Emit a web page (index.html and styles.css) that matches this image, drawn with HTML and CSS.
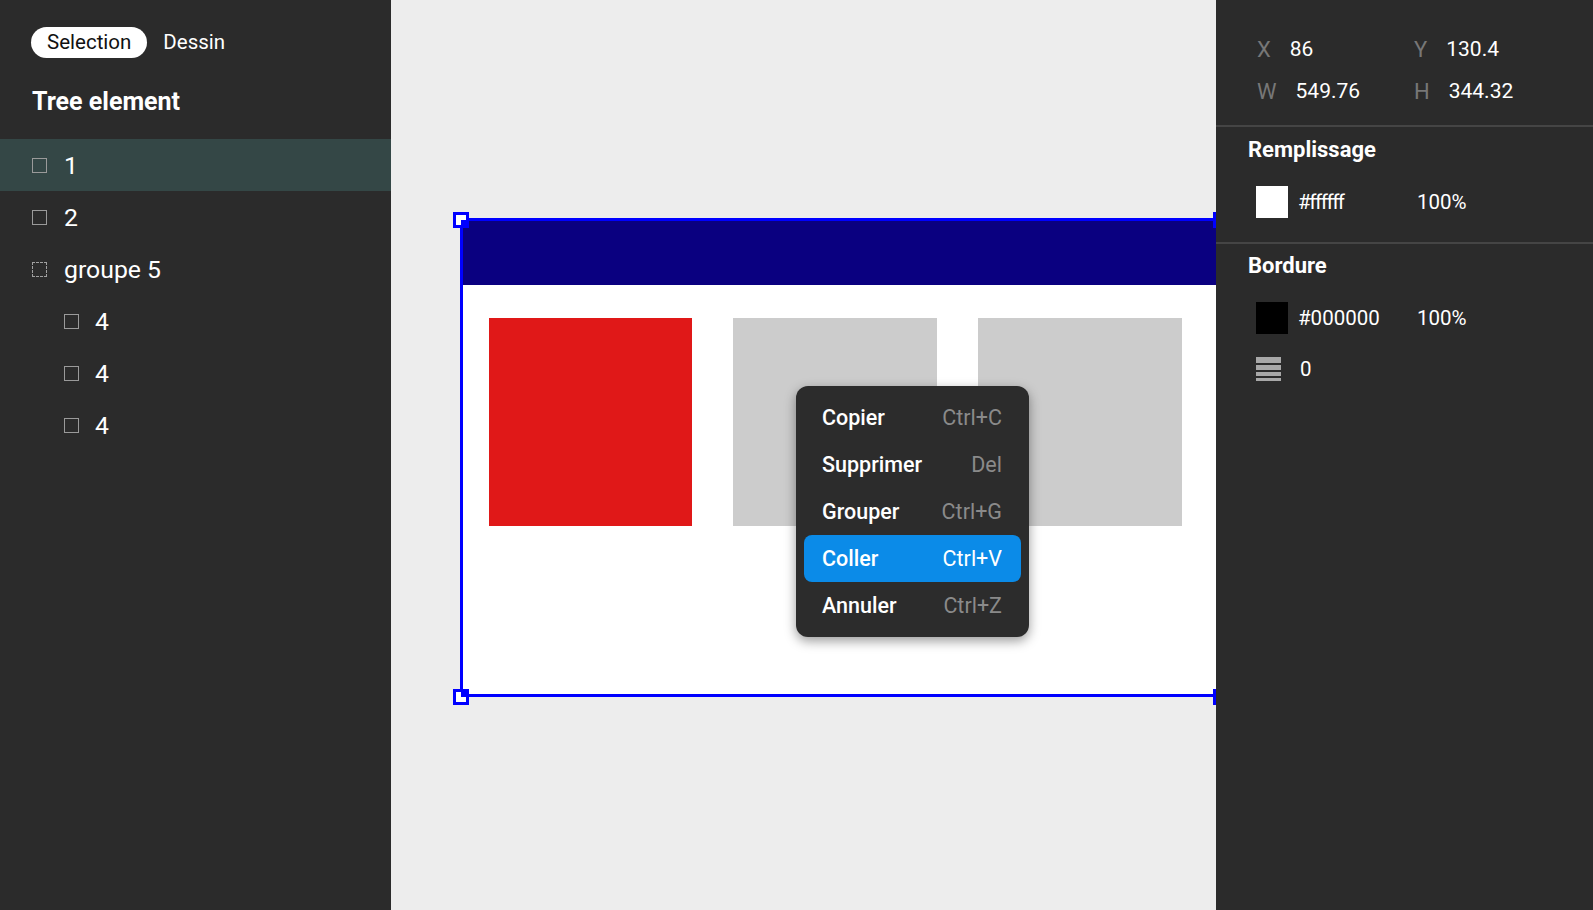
FILE: index.html
```html
<!DOCTYPE html>
<html lang="fr">
<head>
<meta charset="utf-8">
<title>Editor</title>
<link rel="stylesheet" href="styles.css">
</head>
<body>
<div class="app">
  <aside class="left">
    <div class="tabs">
      <span class="tab active">Selection</span>
      <span class="tab">Dessin</span>
    </div>
    <h2 class="tree-title">Tree element</h2>
    <ul class="tree">
      <li class="node selected"><span class="cb"></span><span class="label">1</span></li>
      <li class="node"><span class="cb"></span><span class="label">2</span></li>
      <li class="node"><span class="cb dashed"></span><span class="label">groupe 5</span></li>
      <li class="node child"><span class="cb"></span><span class="label">4</span></li>
      <li class="node child"><span class="cb"></span><span class="label">4</span></li>
      <li class="node child"><span class="cb"></span><span class="label">4</span></li>
    </ul>
  </aside>

  <main class="canvas">
    <div class="frame">
      <div class="frame-header"></div>
      <div class="frame-body">
        <div class="box red"></div>
        <div class="box gray"></div>
        <div class="box gray"></div>
      </div>
    </div>
    <span class="handle h-tl"></span>
    <span class="handle h-bl"></span>
    <span class="handle h-tr"></span>
    <span class="handle h-br"></span>

    <div class="menu">
      <div class="menu-item"><span class="mi-label">Copier</span><span class="mi-key">Ctrl+C</span></div>
      <div class="menu-item"><span class="mi-label">Supprimer</span><span class="mi-key">Del</span></div>
      <div class="menu-item"><span class="mi-label">Grouper</span><span class="mi-key">Ctrl+G</span></div>
      <div class="menu-item active"><span class="mi-label">Coller</span><span class="mi-key">Ctrl+V</span></div>
      <div class="menu-item"><span class="mi-label">Annuler</span><span class="mi-key">Ctrl+Z</span></div>
    </div>
  </main>

  <aside class="right">
    <div class="coords">
      <div class="coord"><span class="c-label">X</span><span class="c-val">86</span></div>
      <div class="coord"><span class="c-label">Y</span><span class="c-val">130.4</span></div>
      <div class="coord"><span class="c-label">W</span><span class="c-val">549.76</span></div>
      <div class="coord"><span class="c-label">H</span><span class="c-val">344.32</span></div>
    </div>
    <section class="prop">
      <h3 class="prop-title">Remplissage</h3>
      <div class="prop-row">
        <span class="swatch white"></span>
        <span class="hex tight">#ffffff</span>
        <span class="pct">100%</span>
      </div>
    </section>
    <section class="prop">
      <h3 class="prop-title">Bordure</h3>
      <div class="prop-row">
        <span class="swatch black"></span>
        <span class="hex">#000000</span>
        <span class="pct">100%</span>
      </div>
      <div class="prop-row stroke-row">
        <svg class="stroke-icon" width="25" height="25" viewBox="0 0 25 25">
          <rect x="0" y="0" width="25" height="6" fill="#a8a8a8"/>
          <rect x="0" y="8" width="25" height="5" fill="#a8a8a8"/>
          <rect x="0" y="15" width="25" height="4" fill="#a8a8a8"/>
          <rect x="0" y="21" width="25" height="3" fill="#a8a8a8"/>
        </svg>
        <span class="stroke-val">0</span>
      </div>
    </section>
  </aside>
</div>
</body>
</html>
```

FILE: styles.css
```css
* { box-sizing: border-box; }

html, body {
  margin: 0;
  padding: 0;
  height: 100%;
}

body {
  background: #2b2b2b;
  font-family: Roboto, "Noto Sans", "Liberation Sans", sans-serif;
  color: #ffffff;
  overflow: hidden;
}

.app {
  display: flex;
  width: 1593px;
  height: 910px;
}

/* ---------- left panel ---------- */
.left {
  width: 391px;
  flex: none;
  background: #2b2b2b;
  padding-top: 27px;
}

.tabs {
  display: flex;
  padding-left: 31px;
}

.tab {
  height: 31px;
  line-height: 31px;
  padding: 0 16px;
  border-radius: 16px;
  font-size: 20.5px;
  color: #ffffff;
}

.tab.active {
  background: #ffffff;
  color: #111111;
}

.tree-title {
  margin: 29px 0 23px 32px;
  font-size: 25px;
  line-height: 29px;
  font-weight: 700;
}

.tree {
  list-style: none;
  margin: 0;
  padding: 0;
}

.node {
  height: 52px;
  display: flex;
  align-items: center;
  padding-left: 32px;
  gap: 17px;
  font-size: 24.8px;
}

.node.child {
  padding-left: 64px;
  gap: 16px;
}

.node.selected {
  background: #344746;
}

.cb {
  width: 15px;
  height: 15px;
  border: 1.5px solid #9a9a9a;
  flex: none;
}

.cb.dashed {
  border-style: dashed;
  border-width: 1px;
  border-color: #a0a0a0;
}

/* ---------- canvas ---------- */
.canvas {
  flex: 1;
  position: relative;
  background: #ededed;
  overflow: hidden;
}

.frame {
  position: absolute;
  left: 69px;
  top: 218px;
  width: 762px;
  height: 479px;
  border: 3px solid #0000ff;
  background: #ffffff;
}

.frame-header {
  height: 64px;
  background: #0a0080;
}

.frame-body {
  display: flex;
  gap: 41px;
  padding: 33px 0 0 26px;
}

.box {
  width: 204px;
  height: 208px;
  flex: none;
}

.box.red { background: #e01818; width: 203px; }
.box.gray { background: #cccccc; }

.handle {
  position: absolute;
  width: 16px;
  height: 16px;
  border: 3px solid #0000ff;
  background: #ffffff;
}

.handle::after {
  content: "";
  position: absolute;
  width: 5px;
  height: 5px;
  background: #0000ff;
  right: 0;
}

.h-tl { left: 62px; top: 212px; }
.h-tl::after { bottom: 0; }
.h-bl { left: 62px; top: 689px; }
.h-bl::after { top: 0; }
.h-tr { left: 822px; top: 212px; }
.h-tr::after { bottom: 0; }
.h-br { left: 822px; top: 689px; }
.h-br::after { top: 0; }

.menu {
  position: absolute;
  left: 405px;
  top: 386px;
  width: 233px;
  padding: 8px;
  background: #2c2c2c;
  border-radius: 12px;
  box-shadow: 0 4px 12px rgba(0, 0, 0, 0.4);
}

.menu-item {
  height: 47px;
  display: flex;
  align-items: center;
  justify-content: space-between;
  padding: 0 19px 0 18px;
  border-radius: 8px;
}

.menu-item.active {
  background: #0b8be8;
}

.mi-label {
  font-size: 21.5px;
  font-weight: 500;
  color: #ffffff;
}

.mi-key {
  font-size: 21.5px;
  color: #8a8a8a;
}

.menu-item.active .mi-key {
  color: #ffffff;
}

/* ---------- right panel ---------- */
.right {
  width: 377px;
  flex: none;
  background: #2b2b2b;
}

.coords {
  display: grid;
  grid-template-columns: 157px 157px;
  padding: 28px 0 13px 41px;
  border-bottom: 2px solid #454545;
}

.coord {
  height: 42px;
  display: flex;
  align-items: center;
  gap: 19px;
}

.c-label {
  font-size: 22px;
  color: #777777;
}

.c-val {
  font-size: 21px;
  color: #ffffff;
}

.prop {
  padding: 10px 0 24px 32px;
  border-bottom: 2px solid #454545;
}

.prop:last-child {
  border-bottom: none;
  padding-top: 9px;
}

.prop-title {
  margin: 0;
  font-size: 22px;
  line-height: 26px;
  font-weight: 700;
}

.prop-row {
  display: flex;
  align-items: center;
  margin: 23px 0 0 8px;
  height: 32px;
}

.swatch {
  width: 32px;
  height: 32px;
  flex: none;
}

.swatch.white { background: #ffffff; }
.swatch.black { background: #000000; }

.hex {
  width: 119px;
  margin-left: 10px;
  font-size: 20.5px;
}

.hex.tight {
  letter-spacing: -1.4px;
}

.pct {
  font-size: 20.5px;
}

.stroke-row {
  margin-top: 19px;
}

.stroke-icon {
  flex: none;
  display: block;
}

.stroke-val {
  margin-left: 19px;
  font-size: 20.5px;
}
```
